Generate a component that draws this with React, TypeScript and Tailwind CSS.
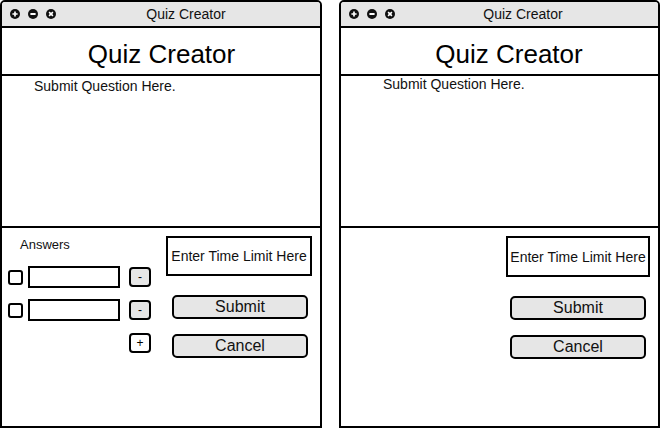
import type { ReactNode } from 'react'

const FONT = { fontFamily: '"Liberation Sans", Arial, Helvetica, sans-serif' }

function WinIcon({ kind }: { kind: 'plus' | 'minus' | 'close' }) {
    return (
        <svg width="10" height="10" viewBox="0 0 10 10">
            <circle cx="5" cy="5" r="5" fill="#111" />
            {kind === 'plus' && <path d="M5 2.4V7.6M2.4 5H7.6" stroke="#fff" strokeWidth="1.7" />}
            {kind === 'minus' && <path d="M2.4 5H7.6" stroke="#fff" strokeWidth="1.8" />}
            {kind === 'close' && <path d="M3.1 3.1L6.9 6.9M6.9 3.1L3.1 6.9" stroke="#fff" strokeWidth="1.6" />}
        </svg>
    )
}

function AnswerRow() {
    return (
        <div className="flex items-center">
            <div className="ml-[6px] w-[15px] h-[15px] border-2 border-black rounded-[3px] bg-white" />
            <div className="ml-[5px] w-[92px] h-[22px] border-2 border-black bg-white" />
            <button className="ml-[9px] w-[22px] h-[20px] border-2 border-black rounded-[4px] bg-[#e6e6e6] text-[12px] leading-none text-black flex items-center justify-center pb-[1px]">
                -
            </button>
        </div>
    )
}

function GreyButton({ children, ml }: { children: ReactNode; ml: string }) {
    return (
        <button
            className={`${ml} w-[136px] h-[24px] border-2 border-black rounded-[5px] bg-[#e6e6e6] text-[16px] leading-none text-[#111] flex items-center justify-center`}
        >
            {children}
        </button>
    )
}

type WinProps = {
    withAnswers: boolean
}

function QuizWindow({ withAnswers }: WinProps) {
    return (
        <div className={`${withAnswers ? 'w-[322px]' : 'w-[321px]'} h-[428px] border-2 border-black rounded-t-[5px] bg-white flex flex-col overflow-hidden`}>
            {/* title bar */}
            <div className="h-[26px] shrink-0 bg-[#e6e6e6] border-b-2 border-black flex items-center">
                <div className="flex items-center gap-[8px] pl-[8px]">
                    <WinIcon kind="plus" />
                    <WinIcon kind="minus" />
                    <WinIcon kind="close" />
                </div>
                <span className={`flex-1 text-center text-[14px] leading-[16px] text-[#111] ${withAnswers ? 'pr-[4px]' : 'pr-[7px]'}`}>
                    Quiz Creator
                </span>
            </div>

            {/* header */}
            <div className={`h-[48px] shrink-0 border-b-2 border-black pt-[11px] text-center text-[26px] leading-[30px] text-black ${withAnswers ? 'pl-[1px]' : 'pl-[19px]'}`}>
                Quiz Creator
            </div>

            {/* question area */}
            <div className={`h-[152px] shrink-0 border-b-2 border-black text-[14px] leading-[16px] text-[#111] ${withAnswers ? 'pl-[32px] pt-[2px]' : 'pl-[42px] pt-0'}`}>
                Submit Question Here.
            </div>

            {/* bottom area */}
            <div className="flex-1 flex">
                <div className={withAnswers ? 'w-[164px] pt-[9px]' : 'w-[165px]'}>
                    {withAnswers && (
                        <>
                            <div className="pl-[18px] text-[13px] leading-[16px] text-[#111]">Answers</div>
                            <div className="mt-[13px] flex flex-col gap-[11px]">
                                <AnswerRow />
                                <AnswerRow />
                            </div>
                            <div className="mt-[12px] pl-[127px]">
                                <button className="w-[22px] h-[20px] border-2 border-black rounded-[4px] bg-white text-[12px] leading-none text-black flex items-center justify-center">
                                    +
                                </button>
                            </div>
                        </>
                    )}
                </div>
                <div className="pt-[8px] flex flex-col">
                    <div
                        className={`${withAnswers ? 'w-[146px] h-[40px]' : 'w-[144px] h-[41px]'} border-2 border-black bg-white flex items-center justify-center text-[14px] leading-none text-[#111] whitespace-nowrap`}
                    >
                        Enter Time Limit Here
                    </div>
                    <div className="mt-[19px]">
                        <GreyButton ml={withAnswers ? 'ml-[6px]' : 'ml-[4px]'}>Submit</GreyButton>
                    </div>
                    <div className="mt-[15px]">
                        <GreyButton ml={withAnswers ? 'ml-[6px]' : 'ml-[4px]'}>Cancel</GreyButton>
                    </div>
                </div>
            </div>
        </div>
    )
}

export default function App() {
    return (
        <div className="w-[663px] h-[429px] bg-white flex gap-[17px]" style={FONT}>
            <QuizWindow withAnswers />
            <QuizWindow withAnswers={false} />
        </div>
    )
}
